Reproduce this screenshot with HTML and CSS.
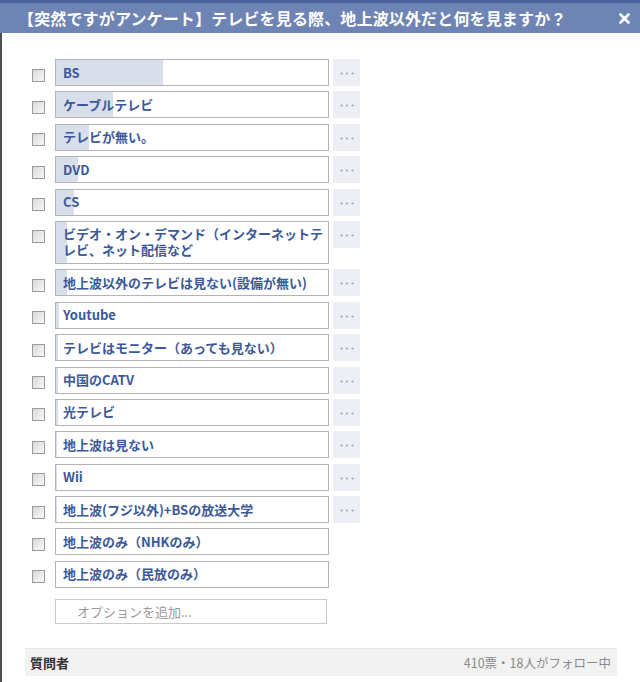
FILE: index.html
```html
<!DOCTYPE html>
<html lang="ja">
<head>
<meta charset="utf-8">
<link rel="stylesheet" href="styles.css">
</head>
<body>
<div class="dialog">
  <div class="header">
    <span class="title">【突然ですがアンケート】テレビを見る際、地上波以外だと何を見ますか？</span>
    <svg class="close" width="11" height="11" viewBox="0 0 11 11"><path d="M1.5 1.5 L9.5 9.5 M9.5 1.5 L1.5 9.5" stroke="#fff" stroke-width="2.6" stroke-linecap="round"/></svg>
  </div>
  <div class="content">
    <div class="options">
      <div class="row"><span class="check"></span><div class="box"><span class="bar" style="width:107px"></span><span class="label">BS</span></div><span class="more"><svg width="14" height="3" viewBox="0 0 14 3"><circle cx="1.5" cy="1.5" r="1.1"/><circle cx="7" cy="1.5" r="1.1"/><circle cx="12.5" cy="1.5" r="1.1"/></svg></span></div>
      <div class="row"><span class="check"></span><div class="box"><span class="bar" style="width:57px"></span><span class="label">ケーブルテレビ</span></div><span class="more"><svg width="14" height="3" viewBox="0 0 14 3"><circle cx="1.5" cy="1.5" r="1.1"/><circle cx="7" cy="1.5" r="1.1"/><circle cx="12.5" cy="1.5" r="1.1"/></svg></span></div>
      <div class="row"><span class="check"></span><div class="box"><span class="bar" style="width:33px"></span><span class="label">テレビが無い。</span></div><span class="more"><svg width="14" height="3" viewBox="0 0 14 3"><circle cx="1.5" cy="1.5" r="1.1"/><circle cx="7" cy="1.5" r="1.1"/><circle cx="12.5" cy="1.5" r="1.1"/></svg></span></div>
      <div class="row"><span class="check"></span><div class="box"><span class="bar" style="width:22px"></span><span class="label">DVD</span></div><span class="more"><svg width="14" height="3" viewBox="0 0 14 3"><circle cx="1.5" cy="1.5" r="1.1"/><circle cx="7" cy="1.5" r="1.1"/><circle cx="12.5" cy="1.5" r="1.1"/></svg></span></div>
      <div class="row"><span class="check"></span><div class="box"><span class="bar" style="width:18px"></span><span class="label">CS</span></div><span class="more"><svg width="14" height="3" viewBox="0 0 14 3"><circle cx="1.5" cy="1.5" r="1.1"/><circle cx="7" cy="1.5" r="1.1"/><circle cx="12.5" cy="1.5" r="1.1"/></svg></span></div>
      <div class="row"><span class="check"></span><div class="box"><span class="bar" style="width:11px"></span><span class="label">ビデオ・オン・デマンド（インターネットテレビ、ネット配信など</span></div><span class="more"><svg width="14" height="3" viewBox="0 0 14 3"><circle cx="1.5" cy="1.5" r="1.1"/><circle cx="7" cy="1.5" r="1.1"/><circle cx="12.5" cy="1.5" r="1.1"/></svg></span></div>
      <div class="row"><span class="check"></span><div class="box"><span class="bar" style="width:11px"></span><span class="label">地上波以外のテレビは見ない(設備が無い)</span></div><span class="more"><svg width="14" height="3" viewBox="0 0 14 3"><circle cx="1.5" cy="1.5" r="1.1"/><circle cx="7" cy="1.5" r="1.1"/><circle cx="12.5" cy="1.5" r="1.1"/></svg></span></div>
      <div class="row"><span class="check"></span><div class="box"><span class="bar" style="width:3px"></span><span class="label">Youtube</span></div><span class="more"><svg width="14" height="3" viewBox="0 0 14 3"><circle cx="1.5" cy="1.5" r="1.1"/><circle cx="7" cy="1.5" r="1.1"/><circle cx="12.5" cy="1.5" r="1.1"/></svg></span></div>
      <div class="row"><span class="check"></span><div class="box"><span class="bar" style="width:2px"></span><span class="label">テレビはモニター（あっても見ない）</span></div><span class="more"><svg width="14" height="3" viewBox="0 0 14 3"><circle cx="1.5" cy="1.5" r="1.1"/><circle cx="7" cy="1.5" r="1.1"/><circle cx="12.5" cy="1.5" r="1.1"/></svg></span></div>
      <div class="row"><span class="check"></span><div class="box"><span class="bar" style="width:2px"></span><span class="label">中国のCATV</span></div><span class="more"><svg width="14" height="3" viewBox="0 0 14 3"><circle cx="1.5" cy="1.5" r="1.1"/><circle cx="7" cy="1.5" r="1.1"/><circle cx="12.5" cy="1.5" r="1.1"/></svg></span></div>
      <div class="row"><span class="check"></span><div class="box"><span class="bar" style="width:2px"></span><span class="label">光テレビ</span></div><span class="more"><svg width="14" height="3" viewBox="0 0 14 3"><circle cx="1.5" cy="1.5" r="1.1"/><circle cx="7" cy="1.5" r="1.1"/><circle cx="12.5" cy="1.5" r="1.1"/></svg></span></div>
      <div class="row"><span class="check"></span><div class="box"><span class="bar" style="width:1px"></span><span class="label">地上波は見ない</span></div><span class="more"><svg width="14" height="3" viewBox="0 0 14 3"><circle cx="1.5" cy="1.5" r="1.1"/><circle cx="7" cy="1.5" r="1.1"/><circle cx="12.5" cy="1.5" r="1.1"/></svg></span></div>
      <div class="row"><span class="check"></span><div class="box"><span class="bar" style="width:1px"></span><span class="label">Wii</span></div><span class="more"><svg width="14" height="3" viewBox="0 0 14 3"><circle cx="1.5" cy="1.5" r="1.1"/><circle cx="7" cy="1.5" r="1.1"/><circle cx="12.5" cy="1.5" r="1.1"/></svg></span></div>
      <div class="row"><span class="check"></span><div class="box"><span class="bar" style="width:1px"></span><span class="label">地上波(フジ以外)+BSの放送大学</span></div><span class="more"><svg width="14" height="3" viewBox="0 0 14 3"><circle cx="1.5" cy="1.5" r="1.1"/><circle cx="7" cy="1.5" r="1.1"/><circle cx="12.5" cy="1.5" r="1.1"/></svg></span></div>
      <div class="row"><span class="check"></span><div class="box"><span class="label">地上波のみ（NHKのみ）</span></div></div>
      <div class="row"><span class="check"></span><div class="box"><span class="label">地上波のみ（民放のみ）</span></div></div>
      <div class="add">オプションを追加...</div>
    </div>
    <div class="footer">
      <span class="asker">質問者</span>
      <span class="stats">410票・18人がフォロー中</span>
    </div>
  </div>
</div>
</body>
</html>
```

FILE: styles.css
```css
* { box-sizing: border-box; }
html, body {
  margin: 0;
  padding: 0;
  background: #fff;
}
body {
  font-family: "Noto Sans CJK JP", "Noto Sans", sans-serif;
  width: 640px;
  height: 682px;
  overflow: hidden;
}
.dialog {
  height: 682px;
  display: flex;
  flex-direction: column;
}
.header {
  height: 33px;
  flex: none;
  background: #6d84b4;
  border-top: 3px solid #4a63a0;
  display: flex;
  align-items: center;
  justify-content: space-between;
  padding: 0 10px 1px 18px;
}
.title {
  color: #fff;
  font-size: 16px;
  font-weight: bold;
  line-height: 20px;
  letter-spacing: 0.15px;
}
.close {
  display: block;
  margin-top: 1px;
}
.content {
  flex: 1;
  border-left: 2px solid #4e4e4e;
  padding: 26px 0 0 23px;
}
.options {
  display: flex;
  flex-direction: column;
  gap: 5.4px;
  padding-left: 7px;
}
.row {
  display: flex;
  align-items: flex-start;
}
.check {
  flex: none;
  width: 13px;
  height: 13px;
  margin-top: 9.5px;
  margin-right: 10px;
  border: 1px solid #9c9c9c;
  background: linear-gradient(135deg, #d6d6d6 0%, #ebebeb 55%, #f7f7f7 100%);
}
.box {
  position: relative;
  flex: none;
  width: 274px;
  border: 1px solid #b3b3b3;
  background: #fff;
}
.bar {
  position: absolute;
  left: 0;
  top: 0;
  bottom: 0;
  background: #d8dfea;
}
.label {
  position: relative;
  display: block;
  padding: 4.5px 4px 4.5px 7px;
  font-size: 13px;
  line-height: 16px;
  font-weight: bold;
  color: #3b5998;
}
.more {
  flex: none;
  width: 27px;
  height: 27px;
  margin-left: 4px;
  background: #edeff4;
  display: flex;
  align-items: center;
  justify-content: center;
  padding-top: 2px;
}
.more svg { fill: #98a1b6; display: block; }
.add {
  margin-top: 5.6px;
  margin-left: 23px;
  width: 272px;
  height: 25px;
  border: 1px solid #c9c9c9;
  font-size: 13px;
  line-height: 23px;
  color: #9a9a9a;
  padding-left: 21px;
}
.footer {
  margin-top: 24px;
  width: 592px;
  height: 28px;
  background: #f2f2f2;
  border-top: 1px solid #e6e6e6;
  display: flex;
  align-items: center;
  justify-content: space-between;
  padding: 0 6px 0 5px;
}
.asker {
  font-size: 13px;
  font-weight: bold;
  color: #333;
}
.stats {
  font-size: 12.5px;
  color: #8a8a8a;
}
```
